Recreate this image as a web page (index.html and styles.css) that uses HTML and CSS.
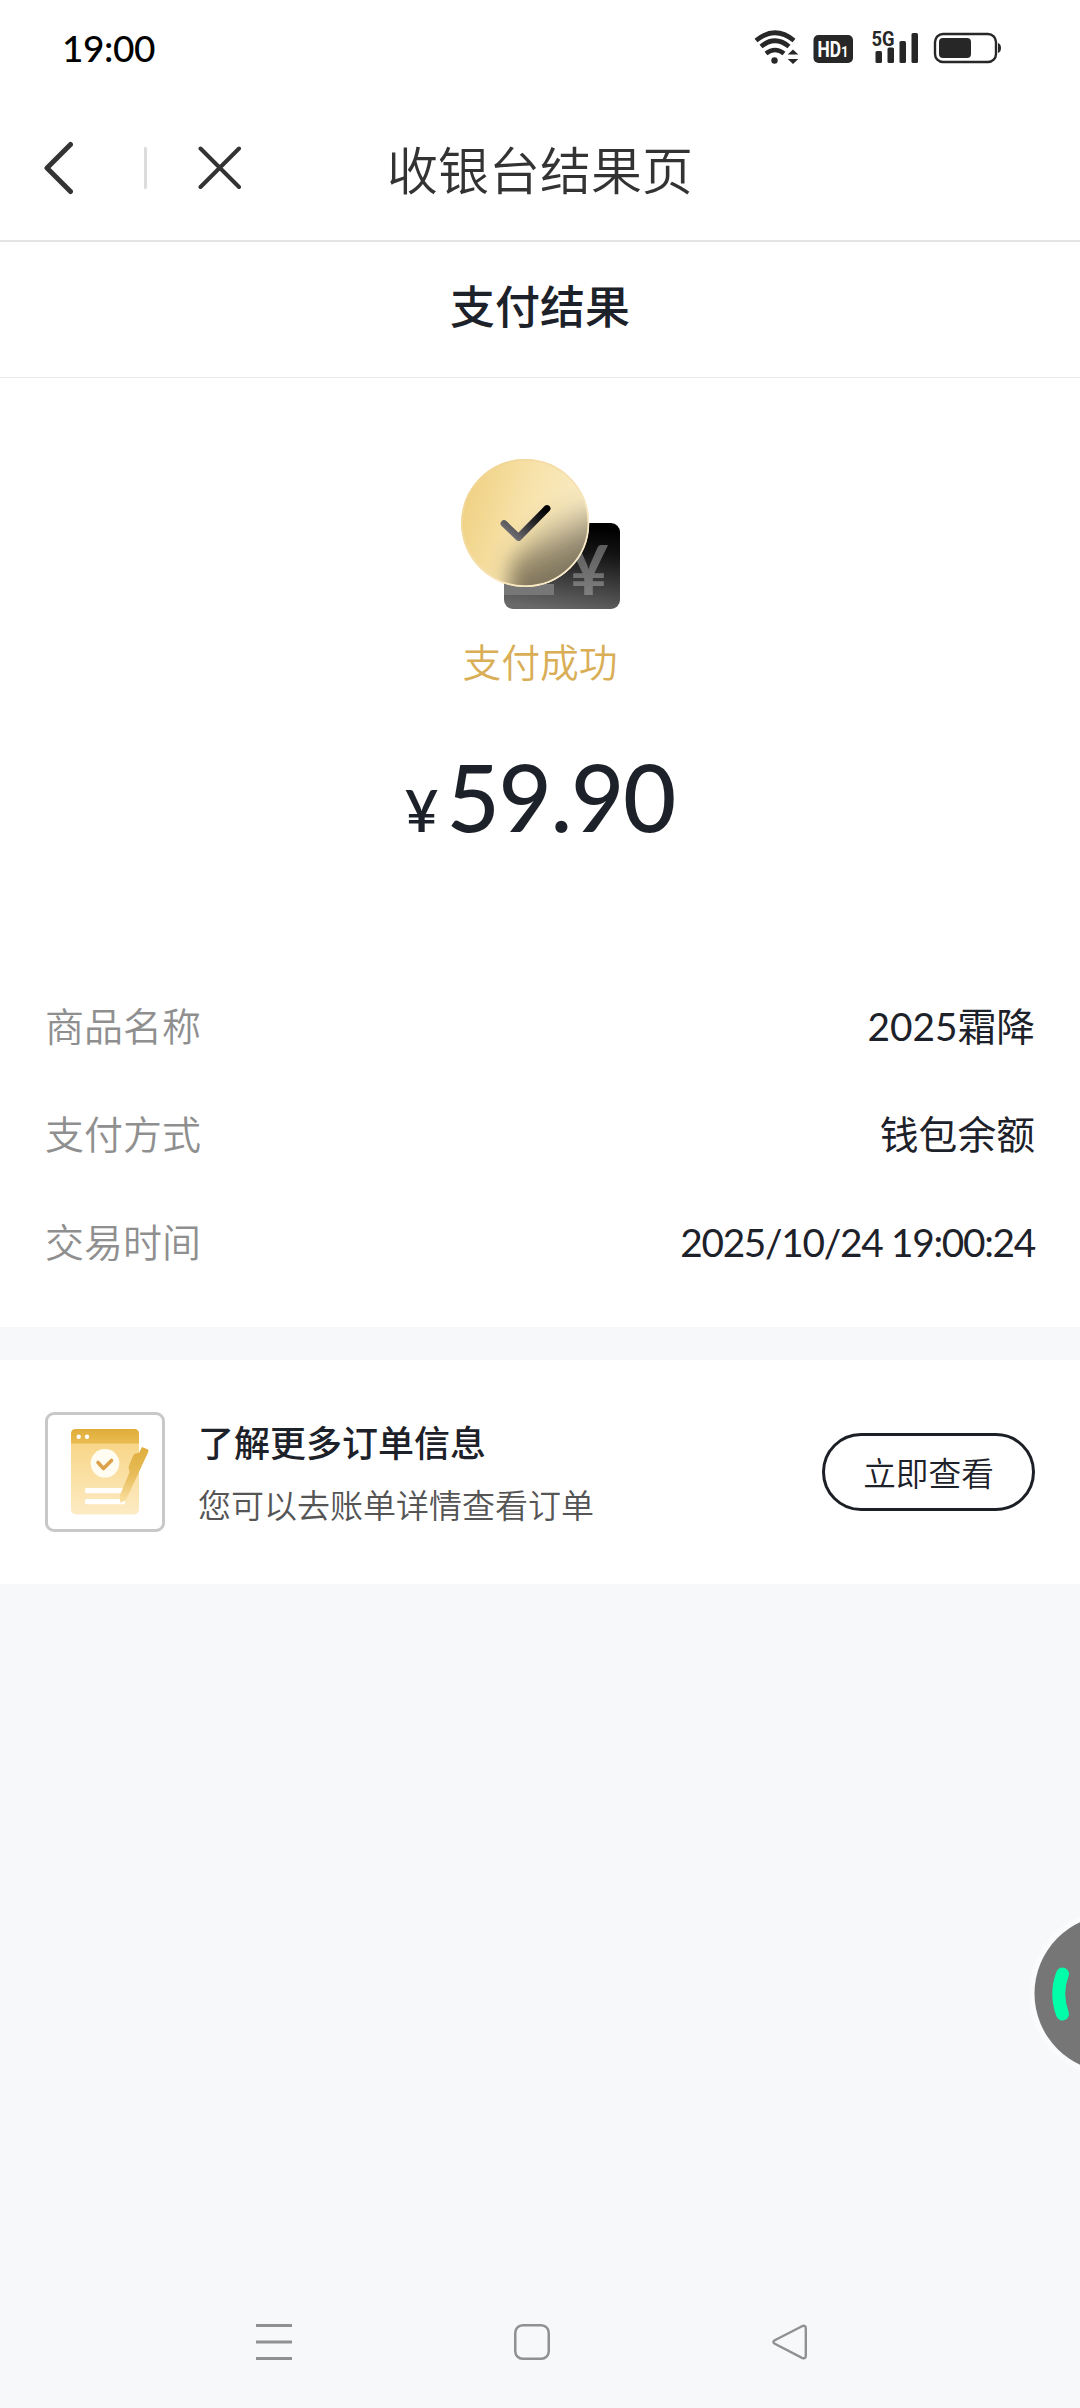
FILE: index.html
```html
<!DOCTYPE html>
<html lang="zh-CN">
<head>
<meta charset="utf-8">
<title>收银台结果页</title>
<link rel="stylesheet" href="styles.css">
</head>
<body>
<div class="page">
  <header class="status">
    <span class="clock">19:00</span>
    <svg class="status-icons" width="260" height="50" viewBox="745 20 260 50">
      <g fill="none" stroke="#272727" stroke-width="4.6">
        <path d="M756 40.500Q775 25 794 40.500"/>
        <path d="M761 46.500Q775 35 789 46.500"/>
        <path d="M766 53.500Q775 46.500 784 53.500"/>
      </g>
      <g fill="#272727">
        <circle cx="774.500" cy="60.500" r="3.200"/>
        <path d="M787.700 54.500L793 49.500L798.300 54.500ZM787.700 59L793 64L798.300 59Z"/>
        <rect x="813.500" y="35" width="39.500" height="28" rx="5"/>
        <rect x="875.500" y="51" width="6.500" height="12" rx="1.500"/>
        <rect x="887.500" y="47.500" width="6.500" height="15.500" rx="1.500"/>
        <rect x="899.500" y="41" width="6.500" height="22" rx="1.500"/>
        <rect x="911.500" y="33" width="6.500" height="30" rx="1.500"/>
        <rect x="939" y="38" width="32" height="20" rx="4"/>
        <path d="M998 43q3 1 3 5t-3 5z"/>
      </g>
      <rect x="935" y="34" width="61" height="28" rx="8" fill="none" stroke="#272727" stroke-width="2.400"/>
      <text class="badge-text" x="817.500" y="57" font-size="22"><tspan textLength="23.500" lengthAdjust="spacingAndGlyphs">HD</tspan><tspan font-size="14" textLength="7.500" lengthAdjust="spacingAndGlyphs">1</tspan></text>
      <text class="net-text" x="871.500" y="45.500" font-size="20" textLength="23" lengthAdjust="spacingAndGlyphs">5G</text>
    </svg>
  </header>
  <nav class="titlebar">
    <div class="actions">
      <svg width="30" height="54" viewBox="0 0 30 54"><path d="M27.500 3.500L4 27L27.500 50.500" fill="none" stroke="#333" stroke-width="5" stroke-linecap="round" stroke-linejoin="round"/></svg>
      <i class="divider"></i>
      <svg width="44" height="44" viewBox="0 0 44 44"><path d="M2.500 2.500L41 41M41 2.500L2.500 41" fill="none" stroke="#333" stroke-width="4" stroke-linecap="round"/></svg>
    </div>
    <h1 class="title">收银台结果页</h1>
    <div class="actions"></div>
  </nav>
  <h2 class="subtitle">支付结果</h2>
  <main class="result">
    <svg class="hero" width="180" height="170" viewBox="450 450 180 170">
      <defs>
        <linearGradient id="card" x1=".55" y1="0" x2=".35" y2="1"><stop offset="0" stop-color="#000"/><stop offset=".3" stop-color="#151515"/><stop offset="1" stop-color="#696969"/></linearGradient>
        <linearGradient id="gold" x1="0" y1=".35" x2="1" y2=".65"><stop offset="0" stop-color="#f0d183"/><stop offset=".45" stop-color="#f7e2aa"/><stop offset="1" stop-color="#f9edca"/></linearGradient>
        <linearGradient id="rim" x1="0" y1="0" x2="1" y2="1"><stop offset="0" stop-color="#efd18b"/><stop offset="1" stop-color="#fbefd5"/></linearGradient>
        <linearGradient id="tick" gradientUnits="userSpaceOnUse" x1="545" y1="508" x2="517" y2="540"><stop offset="0" stop-color="#000"/><stop offset=".4" stop-color="#222124"/><stop offset="1" stop-color="#6d6c70"/></linearGradient>
        <linearGradient id="yen" x1="0" y1="0" x2="0" y2="1"><stop offset="0" stop-color="#505050"/><stop offset="1" stop-color="#898989"/></linearGradient>
        <linearGradient id="shade" gradientUnits="userSpaceOnUse" x1="529" y1="517" x2="556" y2="576"><stop offset="0" stop-color="#4d4534" stop-opacity="0"/><stop offset=".3" stop-color="#4d4534" stop-opacity=".18"/><stop offset=".65" stop-color="#4d4534" stop-opacity=".55"/><stop offset="1" stop-color="#4d4534" stop-opacity=".72"/></linearGradient>
        <clipPath id="disc"><circle cx="525.200" cy="523" r="63"/></clipPath>
        <filter id="soft" x="-50%" y="-50%" width="200%" height="200%"><feGaussianBlur stdDeviation="10"/></filter>
      </defs>
      <rect x="504" y="523" width="116" height="86" rx="9" fill="url(#card)"/>
      <rect x="504" y="584" width="50" height="11" fill="#777"/>
      <text class="yen-mark" x="588.500" y="595" font-size="69" text-anchor="middle" fill="url(#yen)">¥</text>
      <circle cx="525.200" cy="523" r="64" fill="url(#gold)"/>
      <g clip-path="url(#disc)"><path d="M509 615V562Q540 520 562 508L640 490V615Z" fill="url(#shade)" filter="url(#soft)"/></g>
      <circle cx="525.200" cy="523" r="63.200" fill="none" stroke="url(#rim)" stroke-width="1.700"/>
      <path d="M504 523.500L518.500 537.500L547 508.500" fill="none" stroke="url(#tick)" stroke-width="6.800" stroke-linecap="round" stroke-linejoin="round"/>
    </svg>
    <p class="state">支付成功</p>
    <p class="amount"><span class="currency">¥</span><span class="figure">59.90</span></p>
    <dl class="details">
      <div class="row"><dt>商品名称</dt><dd>2025霜降</dd></div>
      <div class="row"><dt>支付方式</dt><dd>钱包余额</dd></div>
      <div class="row"><dt>交易时间</dt><dd class="datetime">2025/10/24 19:00:24</dd></div>
    </dl>
  </main>
  <section class="order">
    <div class="thumb">
      <svg width="114" height="114" viewBox="48 1415 114 114">
        <defs>
          <linearGradient id="sheet" x1="0" y1="0" x2="0" y2="1"><stop offset="0" stop-color="#f7d27c"/><stop offset="1" stop-color="#fdebc4"/></linearGradient>
          <linearGradient id="head" x1="0" y1="0" x2="0" y2="1"><stop offset="0" stop-color="#dfad39"/><stop offset="1" stop-color="#e9bb52"/></linearGradient>
          <linearGradient id="pen" x1="0" y1="0" x2="0" y2="1"><stop offset="0" stop-color="#dfae3c"/><stop offset=".5" stop-color="#e7bc59"/><stop offset="1" stop-color="#fae1a4"/></linearGradient>
        </defs>
        <rect x="71" y="1429" width="68" height="85.500" rx="5" fill="url(#sheet)"/>
        <path d="M71 1443.500V1434q0-5 5-5H134q5 0 5 5v9.500z" fill="url(#head)"/>
        <circle cx="78.700" cy="1436.700" r="2.200" fill="#fff"/><circle cx="87" cy="1436.700" r="2.200" fill="#fff"/>
        <circle cx="105" cy="1463.300" r="14.300" fill="#fffcf2"/>
        <path d="M98 1462.500L103.500 1468.500L111.500 1460.500" fill="none" stroke="#dba24b" stroke-width="3.600" stroke-linecap="round" stroke-linejoin="round"/>
        <rect x="85" y="1488" width="40" height="5.300" rx="1.500" fill="#fff"/>
        <rect x="85" y="1499" width="40" height="5.300" rx="1.500" fill="#fff"/>
        <path d="M142 1447L148 1449.500Q149 1450.500 148 1452.500L126 1500L120.500 1503L119.500 1496L129.500 1472.500L128.500 1467L133 1456Q134 1453 139 1453Z" fill="url(#pen)"/>
      </svg>
    </div>
    <div class="info">
      <h3>了解更多订单信息</h3>
      <p>您可以去账单详情查看订单</p>
    </div>
    <button class="view" type="button">立即查看</button>
  </section>
  <footer class="sysnav">
    <svg width="36" height="36" viewBox="0 0 36 36"><path d="M0 1.500H36M0 18H36M0 34.500H36" stroke="#8f9092" stroke-width="3"/></svg>
    <svg width="36" height="36" viewBox="0 0 36 36"><rect x="1.250" y="1.250" width="33.500" height="33.500" rx="7.500" fill="none" stroke="#8f9092" stroke-width="2.500"/></svg>
    <svg width="36" height="36" viewBox="0 0 36 36"><path d="M30 2.200L2.800 16.200Q0 18 2.800 19.800L30 33.800Q33.800 35.300 33.800 31.500V4.500Q33.800 .7 30 2.200Z" fill="none" stroke="#8f9092" stroke-width="2.400"/></svg>
  </footer>
  <svg class="bubble" width="60" height="180" viewBox="1020 1905 60 180">
    <circle cx="1113" cy="1993.500" r="84" fill="#fafbfc"/>
    <circle cx="1113" cy="1993.500" r="78.500" fill="#767676"/>
    <path d="M1062.500 1974Q1055 1993.500 1062.500 2014" fill="none" stroke="#00ffa8" stroke-width="13" stroke-linecap="round"/>
  </svg>
</div>
</body>
</html>
```

FILE: styles.css
```css
* { box-sizing: border-box; margin: 0; padding: 0; }

body {
  background: #f7f8fa;
  font-family: Lato, "Noto Sans CJK SC", sans-serif;
  color: #1d2129;
}

.page {
  position: relative;
  display: flex;
  flex-direction: column;
  width: 1080px;
  height: 2408px;
  overflow: hidden;
}

.status {
  display: flex;
  align-items: center;
  justify-content: space-between;
  height: 96px;
  padding: 0 75px 6px 62px;
  background: #fff;
}

.clock {
  font-size: 37px;
  font-weight: 500;
  line-height: 50px;
  letter-spacing: -0.4px;
  color: #000;
  margin-top: 6px;
}

.badge-text, .net-text { font-family: Roboto, sans-serif; font-weight: 700; fill: #fff; }
.net-text { fill: #272727; }
.yen-mark { font-family: Lato, sans-serif; font-weight: 700; }

.titlebar {
  display: flex;
  align-items: center;
  height: 146px;
  border-bottom: 2px solid #e4e4e4;
  background: #fff;
}

.actions {
  display: flex;
  align-items: center;
  width: 340px;
  height: 54px;
  margin-bottom: 1px;
  padding-left: 43px;
}

.divider {
  width: 3px;
  height: 42px;
  margin: 0 51px 0 71px;
  border-radius: 1px;
  background: #dcdcdc;
}

.title {
  flex: 1;
  padding-top: 5px;
  font-size: 51px;
  font-weight: 350;
  line-height: 60px;
  text-align: center;
  white-space: nowrap;
  color: #333;
}

.subtitle {
  height: 136px;
  padding-top: 35px;
  border-bottom: 1px solid #e8e8e8;
  background: #fff;
  font-size: 45px;
  font-weight: 500;
  line-height: 60px;
  text-align: center;
}

.result {
  display: flex;
  flex-direction: column;
  align-items: center;
  height: 949px;
  padding-top: 72px;
  background: #fff;
}

.state {
  margin-top: 17px;
  font-size: 38.8px;
  font-weight: 350;
  line-height: 50px;
  color: #d9ae56;
}

.amount {
  display: flex;
  align-items: baseline;
  gap: 8px;
  margin-top: 55px;
  line-height: 110px;
}

.currency { font-size: 58px; font-weight: 600; }
.figure { font-size: 92px; font-weight: 500; letter-spacing: -1.3px; }

.details { width: 100%; margin-top: auto; padding: 0 45px 31px; }

.row {
  display: flex;
  align-items: center;
  justify-content: space-between;
  height: 108px;
  font-size: 39px;
  line-height: 54px;
}

.row dt { font-weight: 350; color: #8f8f8f; }
.row dd { font-size: 38.8px; font-weight: 400; }
.row .datetime { letter-spacing: -1.3px; }

.order {
  display: flex;
  align-items: center;
  height: 224px;
  margin-top: 33px;
  padding: 0 45px;
  background: #fff;
}

.thumb {
  width: 120px;
  height: 120px;
  border: 3px solid #c8c8c8;
  border-radius: 9px;
}

.thumb svg { display: block; }

.info { flex: 1; padding: 4px 0 0 33px; }

.info h3 { font-size: 36px; font-weight: 500; line-height: 50px; }

.info p {
  margin-top: 12px;
  font-size: 33px;
  font-weight: 350;
  line-height: 50px;
  color: #555;
}

.view {
  width: 213px;
  height: 78px;
  padding-bottom: 2px;
  border: 3px solid #1d1f27;
  border-radius: 39px;
  background: #fff;
  color: #1d2129;
  font-family: inherit;
  font-size: 32.7px;
  font-weight: 350;
}

.sysnav {
  display: flex;
  align-items: center;
  gap: 222px;
  height: 132px;
  margin-top: auto;
  padding-left: 256px;
}

.bubble { position: absolute; right: 0; top: 1905px; }
```
